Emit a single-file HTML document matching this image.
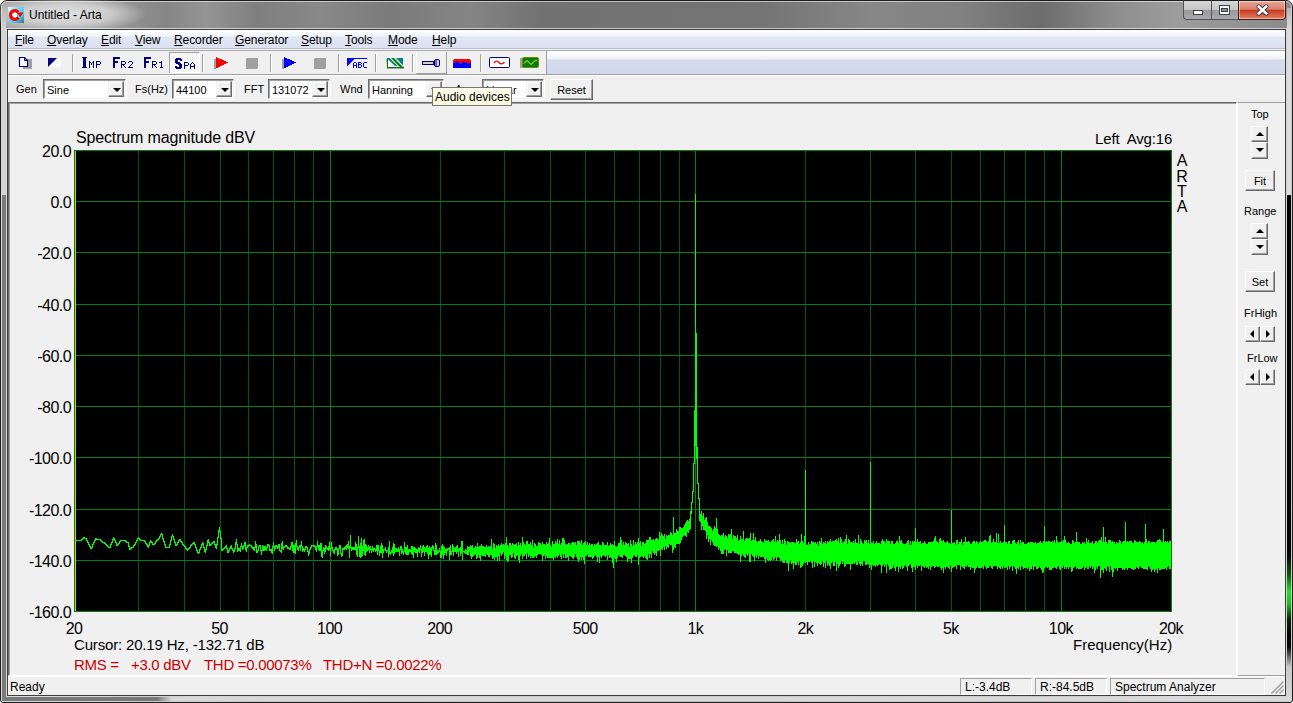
<!DOCTYPE html>
<html><head><meta charset="utf-8">
<style>
*{box-sizing:border-box}
html,body{margin:0;padding:0;width:1293px;height:703px;overflow:hidden;background:#fff}
body{font-family:"Liberation Sans",sans-serif;position:relative;color:#000}
.a{position:absolute}
.t{position:absolute;white-space:pre;line-height:1}
#frame{left:0;top:0;width:1293px;height:703px;border-radius:7px 7px 3px 3px;border:1px solid #1e1e1e;
 background:linear-gradient(to right,#a8a8a8 0px,#a0a0a0 100px,#8e8e8e 140px,#868686 165px,#949494 205px,#7f7f7f 255px,#888 320px,#7b7b7b 390px,#858585 470px,#727272 540px,#747474 760px,#878787 870px,#818181 960px,#6c6c6c 1040px,#8c8c8c 1110px,#9d9d9d 1175px,#8a8a8a 1293px)}
#frin{left:1px;top:1px;width:1291px;height:701px;border-radius:6px 6px 2px 2px;border:1px solid rgba(255,255,255,0.55)}
#client{left:7px;top:29px;width:1279px;height:667px;border:1px solid #3c3c3c;background:#f0f0f0;box-shadow:0 0 0 1px rgba(255,255,255,0.6)}
.u{text-decoration:underline}
.menu{font-size:12px;color:#000;letter-spacing:-0.1px}
.lbl{font-size:11px;color:#000}
.combo{position:absolute;height:20px;background:#fff;border:1px solid;border-color:#6e6e6e #f0f0f0 #f0f0f0 #6e6e6e;box-shadow:inset 1px 1px 0 #a0a0a0, 1px 1px 0 #fff}
.combo span{position:absolute;left:3px;top:4px;font-size:11px;white-space:pre}
.dd{position:absolute;right:1px;top:1px;width:16px;height:16px;background:#f0f0f0;border:1px solid;border-color:#f0f0f0 #696969 #696969 #f0f0f0;box-shadow:inset -1px -1px 0 #a0a0a0,inset 1px 1px 0 #fff}
.dd:after{content:"";position:absolute;left:4px;top:6px;border-left:4px solid transparent;border-right:4px solid transparent;border-top:4px solid #000}
.btn{position:absolute;background:#f0f0f0;border:1px solid;border-color:#fff #696969 #696969 #fff;box-shadow:inset -1px -1px 0 #a0a0a0;font-size:11px;text-align:center}
.sep{position:absolute;width:2px;height:22px;top:53px;border-left:1px solid #a0a0a0;border-right:1px solid #fff}
.spin{position:absolute;background:#f0f0f0;border:1px solid;border-color:#fff #696969 #696969 #fff;box-shadow:inset -1px -1px 0 #a0a0a0}
.spin i{position:absolute;width:0;height:0}
.spin .up{left:4px;top:5px;border-left:4px solid transparent;border-right:4px solid transparent;border-bottom:4px solid #000}
.spin .dn{left:4px;top:5px;border-left:4px solid transparent;border-right:4px solid transparent;border-top:4px solid #000}
.spin .lf{left:4px;top:3px;border-top:4px solid transparent;border-bottom:4px solid transparent;border-right:4px solid #000}
.spin .rt{left:5px;top:3px;border-top:4px solid transparent;border-bottom:4px solid transparent;border-left:4px solid #000}
.red{color:#c80000;letter-spacing:-0.3px}
.plotlbl{font-size:15px;color:#000}
.plotlbl.red{color:#c80000}
</style></head><body>
<div id="frame" class="a"></div>
<div class="a" style="left:0;top:0;width:260px;height:29px;background:radial-gradient(ellipse 80px 18px at 66px 14px,rgba(228,228,228,0.95) 0%,rgba(220,220,220,0.75) 55%,rgba(200,200,200,0) 100%)"></div>
<div class="a" style="left:2px;top:8px;width:4px;height:187px;background:linear-gradient(#b8b8b8,#d4d4d4 22px)"></div>
<div class="a" style="left:2px;top:195px;width:4px;height:502px;background:#7a7a7a"></div>
<div class="a" style="left:1287px;top:8px;width:4px;height:187px;background:linear-gradient(#b4b4b4,#dcdcdc 22px)"></div>
<div class="a" style="left:1287px;top:195px;width:4px;height:502px;background:linear-gradient(#050505 0px,#060606 360px,#0a5a0a 380px,#20e020 396px,#18c818 408px,#062806 424px,#050505 440px,#0a0a0a 452px,#c8c8c8 472px,#d8d8d8 502px)"></div>
<div class="a" style="left:2px;top:697px;width:1289px;height:4px;background:linear-gradient(to right,#7a7a7a 0px,#787878 155px,#d8d8d8 170px,#dadada 100%)"></div>
<div id="frin" class="a"></div>
<!-- title -->
<svg class="a" style="left:8px;top:7px" width="16" height="16" viewBox="8 7 16 16"><defs><linearGradient id="icg" x1="0" y1="0" x2="1" y2="1"><stop offset="0" stop-color="#e8fbff"/><stop offset="0.35" stop-color="#7fd8ec"/><stop offset="0.7" stop-color="#4cc4e4"/><stop offset="1" stop-color="#3a6f70"/></linearGradient></defs>
<rect x="8" y="7" width="16" height="16" fill="url(#icg)"/><ellipse cx="14.3" cy="15" rx="2.6" ry="3.4" fill="#f4ffff"/>
<path d="M18.1 12.2 A4.3 4.3 0 1 0 18.3 17.5" fill="none" stroke="#ff0000" stroke-width="3.2"/><path d="M16.6 12.4 L23.4 12.4 L20.2 17 Z" fill="#ff0000"/></svg>
<div class="t" style="left:29px;top:9px;font-size:12px;color:#000">Untitled - Arta</div>
<!-- caption buttons -->
<div class="a" style="left:1183px;top:1px;width:28px;height:19px;border:1px solid #555;border-right:none;border-top:none;border-radius:0 0 0 4px;background:linear-gradient(#d8d8d8,#c4c4c4 50%,#9a9a9a 52%,#a8a8b0)"></div>
<div class="a" style="left:1193px;top:10px;width:10px;height:5px;background:#fff;border:1px solid #3c4050"></div>
<div class="a" style="left:1211px;top:1px;width:27px;height:19px;border-bottom:1px solid #555;border-left:1px solid #555;background:linear-gradient(#d8d8d8,#c4c4c4 50%,#9a9a9a 52%,#a8a8b0)"></div>
<div class="a" style="left:1219px;top:5px;width:11px;height:10px;background:#fff;border:1px solid #3c4050"></div>
<div class="a" style="left:1221px;top:8px;width:7px;height:4px;background:#8a8a8a;border:1px solid #3c4050"></div>
<div class="a" style="left:1238px;top:1px;width:48px;height:19px;border:1px solid #4a1a10;border-top:none;border-radius:0 0 4px 0;background:linear-gradient(#eaa898,#dc8070 45%,#c83c20 52%,#d86848 85%,#d88870);box-shadow:inset 0 0 0 1px rgba(255,255,255,0.45)"></div>
<svg class="a" style="left:1256px;top:4px" width="13" height="12" viewBox="0 0 13 12"><path d="M2.8 2.6 L10.2 9.4 M10.2 2.6 L2.8 9.4" stroke="#343a4a" stroke-width="4.6" stroke-linecap="round"/><path d="M2.8 2.6 L10.2 9.4 M10.2 2.6 L2.8 9.4" stroke="#fff" stroke-width="2.6" stroke-linecap="square"/></svg>

<div id="client" class="a"></div>
<!-- menu bar -->
<div class="a" style="left:8px;top:30px;width:1277px;height:19px;background:linear-gradient(#fdfeff,#f1f4fa 6px,#e2e7f4 7px,#dae1f1 18px);border-bottom:1px solid #b9bec8"></div><div class="a" style="left:8px;top:49px;width:1277px;height:1px;background:#f4f4f4"></div>
<div class="t menu" style="left:15px;top:34px"><span class="u">F</span>ile</div>
<div class="t menu" style="left:47px;top:34px"><span class="u">O</span>verlay</div>
<div class="t menu" style="left:101px;top:34px"><span class="u">E</span>dit</div>
<div class="t menu" style="left:135px;top:34px"><span class="u">V</span>iew</div>
<div class="t menu" style="left:174px;top:34px"><span class="u">R</span>ecorder</div>
<div class="t menu" style="left:235px;top:34px"><span class="u">G</span>enerator</div>
<div class="t menu" style="left:301px;top:34px"><span class="u">S</span>etup</div>
<div class="t menu" style="left:345px;top:34px"><span class="u">T</span>ools</div>
<div class="t menu" style="left:388px;top:34px"><span class="u">M</span>ode</div>
<div class="t menu" style="left:432px;top:34px"><span class="u">H</span>elp</div>
<!-- toolbar -->
<div class="a" style="left:8px;top:50px;width:1277px;height:25px;background:linear-gradient(#fdfeff 1px,#eef1f9 8px,#d6dcee 9px,#d2d9ed 23px);border-top:1px solid #a8a8a8;border-bottom:1px solid #a0a0a0"></div>
<div class="a" style="left:8px;top:51px;width:539px;height:23px;background:#f0f0f0;border-right:1px solid #a0a0a0"></div>
<svg class="a" style="left:0;top:0" width="560" height="76"><defs><pattern id="dith" width="2" height="2" patternUnits="userSpaceOnUse"><rect width="2" height="2" fill="#f0f0f0"/><rect width="1" height="1" fill="#fff"/><rect x="1" y="1" width="1" height="1" fill="#fff"/></pattern></defs><path d="M72 54h1v18h-1z" fill="#a0a0a0"/><path d="M73 54h1v18h-1z" fill="#fff"/><path d="M202 54h1v18h-1z" fill="#a0a0a0"/><path d="M203 54h1v18h-1z" fill="#fff"/><path d="M270 54h1v18h-1z" fill="#a0a0a0"/><path d="M271 54h1v18h-1z" fill="#fff"/><path d="M338 54h1v18h-1z" fill="#a0a0a0"/><path d="M339 54h1v18h-1z" fill="#fff"/><path d="M375 54h1v18h-1z" fill="#a0a0a0"/><path d="M376 54h1v18h-1z" fill="#fff"/><path d="M412 54h1v18h-1z" fill="#a0a0a0"/><path d="M413 54h1v18h-1z" fill="#fff"/><path d="M480 54h1v18h-1z" fill="#a0a0a0"/><path d="M481 54h1v18h-1z" fill="#fff"/><rect x="169" y="52" width="30" height="21" fill="url(#dith)"/><path d="M169 52h30v1h-29v20h-1z" fill="#a0a0a0"/><path d="M199 52h1v21h-30v-1h29z" fill="#fff"/><path d="M416 52h1v21h-1z" fill="#fff"/><path d="M446 52h1v22h-31v-1h30z" fill="#a0a0a0"/><path d="M82 57h5v1h-5zM83 58h3v1h-3zM83 59h3v1h-3zM83 60h3v1h-3zM83 61h3v1h-3zM83 62h3v1h-3zM83 63h3v1h-3zM83 64h3v1h-3zM83 65h3v1h-3zM83 66h3v1h-3zM82 67h5v1h-5zM89 61h1v1h-1zM93 61h1v1h-1zM89 62h2v1h-2zM92 62h2v1h-2zM89 63h1v1h-1zM91 63h1v1h-1zM93 63h1v1h-1zM89 64h1v1h-1zM91 64h1v1h-1zM93 64h1v1h-1zM89 65h1v1h-1zM93 65h1v1h-1zM89 66h1v1h-1zM93 66h1v1h-1zM89 67h1v1h-1zM93 67h1v1h-1zM96 61h4v1h-4zM96 62h1v1h-1zM100 62h1v1h-1zM96 63h1v1h-1zM100 63h1v1h-1zM96 64h4v1h-4zM96 65h1v1h-1zM96 66h1v1h-1zM96 67h1v1h-1zM113 57h7v1h-7zM113 58h7v1h-7zM113 59h2v1h-2zM113 60h2v1h-2zM113 61h5v1h-5zM113 62h5v1h-5zM113 63h2v1h-2zM113 64h2v1h-2zM113 65h2v1h-2zM113 66h2v1h-2zM113 67h2v1h-2zM121 61h4v1h-4zM121 62h1v1h-1zM125 62h1v1h-1zM121 63h1v1h-1zM125 63h1v1h-1zM121 64h4v1h-4zM121 65h1v1h-1zM123 65h1v1h-1zM121 66h1v1h-1zM124 66h1v1h-1zM121 67h1v1h-1zM125 67h1v1h-1zM129 61h3v1h-3zM128 62h1v1h-1zM132 62h1v1h-1zM132 63h1v1h-1zM131 64h1v1h-1zM130 65h1v1h-1zM129 66h1v1h-1zM128 67h5v1h-5zM144 57h7v1h-7zM144 58h7v1h-7zM144 59h2v1h-2zM144 60h2v1h-2zM144 61h5v1h-5zM144 62h5v1h-5zM144 63h2v1h-2zM144 64h2v1h-2zM144 65h2v1h-2zM144 66h2v1h-2zM144 67h2v1h-2zM152 61h4v1h-4zM152 62h1v1h-1zM156 62h1v1h-1zM152 63h1v1h-1zM156 63h1v1h-1zM152 64h4v1h-4zM152 65h1v1h-1zM154 65h1v1h-1zM152 66h1v1h-1zM155 66h1v1h-1zM152 67h1v1h-1zM156 67h1v1h-1zM161 61h1v1h-1zM159 62h3v1h-3zM161 63h1v1h-1zM161 64h1v1h-1zM161 65h1v1h-1zM161 66h1v1h-1zM160 67h3v1h-3zM176 58h5v1h-5zM175 59h7v1h-7zM175 60h3v1h-3zM180 60h2v1h-2zM175 61h3v1h-3zM175 62h5v1h-5zM176 63h5v1h-5zM178 64h4v1h-4zM179 65h3v1h-3zM175 66h2v1h-2zM179 66h3v1h-3zM175 67h7v1h-7zM176 68h5v1h-5zM184 62h4v1h-4zM184 63h1v1h-1zM188 63h1v1h-1zM184 64h1v1h-1zM188 64h1v1h-1zM184 65h4v1h-4zM184 66h1v1h-1zM184 67h1v1h-1zM184 68h1v1h-1zM192 62h1v1h-1zM191 63h1v1h-1zM193 63h1v1h-1zM190 64h1v1h-1zM194 64h1v1h-1zM190 65h1v1h-1zM194 65h1v1h-1zM190 66h5v1h-5zM190 67h1v1h-1zM194 67h1v1h-1zM190 68h1v1h-1zM194 68h1v1h-1z" fill="#000080"/><rect x="23" y="59" width="9" height="10" fill="#a0a0a0"/><path d="M19.5 57.5H24.5L27.5 60.5V66.5H19.5Z" fill="#fff" stroke="#000080" stroke-width="1.2"/><path d="M24.5 57.5V60.5H27.5" fill="none" stroke="#000080" stroke-width="1"/><path d="M48 58H61V67H48Z" fill="#fff"/><path d="M48 58H57L48 67Z" fill="#000080"/><path d="M214 59h2v10h-2z" fill="#a0a0a0"/><path d="M216 57L228.5 62.5L216 68.5Z" fill="#ff0000" shape-rendering="crispEdges"/><path d="M247 58h11v10l-1 1h-11v-10z" fill="#a0a0a0"/><path d="M282 59h2v10h-2z" fill="#a0a0a0"/><path d="M284 57L296.5 62.5L284 68.5Z" fill="#0000ff" shape-rendering="crispEdges"/><path d="M315 58h11v10l-1 1h-11v-10z" fill="#a0a0a0"/><path d="M347 58h20v1h-12.5l-7.5 7.5z" fill="#0000ff"/><path d="M354 62h2v1h-2zM353 63h1v1h-1zM356 63h1v1h-1zM353 64h1v1h-1zM356 64h1v1h-1zM353 65h4v1h-4zM353 66h1v1h-1zM356 66h1v1h-1zM353 67h1v1h-1zM356 67h1v1h-1zM358 62h3v1h-3zM358 63h1v1h-1zM361 63h1v1h-1zM358 64h3v1h-3zM358 65h1v1h-1zM361 65h1v1h-1zM358 66h1v1h-1zM361 66h1v1h-1zM358 67h3v1h-3zM364 62h3v1h-3zM363 63h1v1h-1zM363 64h1v1h-1zM363 65h1v1h-1zM363 66h1v1h-1zM364 67h3v1h-3z" fill="#0000ff"/><path d="M386 59h1v10h17v-1h-17z" fill="#a8a0a8"/><path d="M387 58h16v10h-16z" fill="#fff"/><path d="M387 58h1v10h-1zM387 67h17v1h-17z" fill="#008000"/><path d="M387 58h2.6l8.2 8h-2.8l-8-7.6z" fill="#008080"/><path d="M391 58h3l9.5 9.5h-3.2z" fill="#008000"/><path d="M396 58h7v7.5z" fill="#008080"/><rect x="422.5" y="61.5" width="11" height="3" fill="#d8d4c0" stroke="#000080"/><rect x="434.5" y="59.5" width="5" height="7" rx="1.5" fill="#d8d4c0" stroke="#000080"/><path d="M436 60v6" stroke="#000080"/><path d="M453 60h1v3h-1zM454 59h1v4h-1zM455 59h1v3h-1zM456 59h1v2h-1zM457 59h1v2h-1zM458 59h1v3h-1zM459 59h1v4h-1zM460 59h1v5h-1zM461 59h1v4h-1zM462 59h1v3h-1zM463 59h1v2h-1zM464 59h1v3h-1zM465 59h1v4h-1zM466 59h1v3h-1zM467 59h1v4h-1zM468 59h1v5h-1zM469 59h1v4h-1zM470 60h1v2h-1z" fill="#ff0000"/><path d="M453 63h1v5h-1zM454 63h1v5h-1zM455 62h1v6h-1zM456 61h1v7h-1zM457 61h1v7h-1zM458 62h1v6h-1zM459 63h1v5h-1zM460 64h1v4h-1zM461 63h1v5h-1zM462 62h1v6h-1zM463 61h1v7h-1zM464 62h1v6h-1zM465 63h1v5h-1zM466 62h1v6h-1zM467 63h1v5h-1zM468 64h1v4h-1zM469 63h1v5h-1zM470 62h1v6h-1z" fill="#0000ff"/><rect x="489.5" y="57.5" width="20" height="10" rx="1" fill="#fff" stroke="#000080"/><path d="M494 63 Q496.5 59.5 499 62.5 T504.5 62" fill="none" stroke="#ff0000" stroke-width="1.3"/><rect x="520" y="58" width="3" height="10" fill="#a0a0a0"/><rect x="522" y="57" width="17" height="11" rx="2" fill="#808000"/><rect x="523" y="58" width="15" height="9" fill="#008000"/><path d="M524 63.5L527 60.5L531 64.5L535 60.5L537 60.5" fill="none" stroke="#ffff00" stroke-width="1"/></svg>
<!-- control bar -->
<div class="a" style="left:8px;top:75px;width:1277px;height:27px;background:#f0f0f0;border-top:1px solid #fff"></div>
<div class="t lbl" style="left:16px;top:84px">Gen</div>
<div class="combo" style="left:43px;top:79px;width:83px"><span>Sine</span><div class="dd"></div></div>
<div class="t lbl" style="left:135px;top:84px">Fs(Hz)</div>
<div class="combo" style="left:172px;top:79px;width:62px"><span>44100</span><div class="dd"></div></div>
<div class="t lbl" style="left:244px;top:84px">FFT</div>
<div class="combo" style="left:268px;top:79px;width:62px"><span>131072</span><div class="dd"></div></div>
<div class="t lbl" style="left:340px;top:84px">Wnd</div>
<div class="combo" style="left:368px;top:79px;width:76px"><span>Hanning</span><div class="dd"></div></div>
<div class="t lbl" style="left:455px;top:84px">Av</div>
<div class="combo" style="left:482px;top:79px;width:62px"><span>Linear</span><div class="dd"></div></div>
<div class="btn" style="left:550px;top:79px;width:43px;height:21px;padding-top:4px">Reset</div>
<!-- tooltip -->
<div class="a" style="left:432px;top:87px;width:80px;height:19px;background:linear-gradient(#ffffee,#fbf8dc);border:1px solid #767676;z-index:5"></div>
<div class="t" style="left:435px;top:91px;font-size:12px;z-index:6">Audio devices</div>

<!-- main panel -->
<div class="a" style="left:8px;top:102px;width:1229px;height:574px;border-top:1px solid #696969;border-left:1px solid #696969;border-right:1px solid #fff;border-bottom:1px solid #fff;box-shadow:inset 1px 1px 0 #a0a0a0"></div>
<div class="a" style="left:1237px;top:102px;width:48px;height:574px;border-top:1px solid #a0a0a0;border-left:1px solid #fff;border-bottom:1px solid #a0a0a0"></div>
<svg class="a" style="left:0;top:0" width="1293" height="703">
<rect x="74" y="150" width="1098" height="462" fill="#000"/>
<path d="M138.5 150V611M184.5 150V611M220.5 150V611M248.5 150V611M273.5 150V611M294.5 150V611M313.5 150V611M440.5 150V611M504.5 150V611M550.5 150V611M585.5 150V611M614.5 150V611M639.5 150V611M660.5 150V611M679.5 150V611M805.5 150V611M870.5 150V611M915.5 150V611M951.5 150V611M980.5 150V611M1004.5 150V611M1025.5 150V611M1044.5 150V611" stroke="#00560e" stroke-width="1" fill="none" shape-rendering="crispEdges"/>
<path d="M330.5 150V611M695.5 150V611M1061.5 150V611M74 201.5H1171M74 252.5H1171M74 304.5H1171M74 355.5H1171M74 406.5H1171M74 457.5H1171M74 509.5H1171M74 560.5H1171" stroke="#00801a" stroke-width="1" fill="none" shape-rendering="crispEdges"/>
<rect x="74.5" y="150.5" width="1097" height="461" fill="none" stroke="#008000" shape-rendering="crispEdges"/>
<path d="M75.5 151V611" stroke="#d0d000" shape-rendering="crispEdges"/>
<path d="M75 540h1v1h-1zM76 540h1v1h-1zM77 540h1v1h-1zM78 540h1v1h-1zM79 540h1v1h-1zM80 540h1v1h-1zM81 539h1v2h-1zM82 538h1v2h-1zM83 537h1v2h-1zM84 537h1v2h-1zM85 538h1v1h-1zM86 538h1v3h-1zM87 540h1v3h-1zM88 542h1v3h-1zM89 544h1v3h-1zM90 546h1v3h-1zM91 547h1v2h-1zM92 544h1v4h-1zM93 542h1v3h-1zM94 540h1v3h-1zM95 538h1v3h-1zM96 538h1v2h-1zM97 539h1v1h-1zM98 539h1v1h-1zM99 539h1v1h-1zM100 539h1v2h-1zM101 540h1v2h-1zM102 541h1v2h-1zM103 542h1v1h-1zM104 542h1v2h-1zM105 543h1v2h-1zM106 544h1v2h-1zM107 545h1v2h-1zM108 546h1v2h-1zM109 547h1v1h-1zM110 544h1v4h-1zM111 542h1v3h-1zM112 539h1v4h-1zM113 537h1v3h-1zM114 538h1v3h-1zM115 540h1v3h-1zM116 542h1v4h-1zM117 544h1v2h-1zM118 543h1v2h-1zM119 541h1v3h-1zM120 540h1v2h-1zM121 540h1v1h-1zM122 540h1v1h-1zM123 540h1v1h-1zM124 540h1v1h-1zM125 540h1v2h-1zM126 541h1v2h-1zM127 542h1v1h-1zM128 542h1v5h-1zM129 546h1v4h-1zM130 548h1v2h-1zM131 547h1v2h-1zM132 547h1v1h-1zM133 545h1v3h-1zM134 544h1v2h-1zM135 542h1v3h-1zM136 540h1v3h-1zM137 538h1v3h-1zM138 537h1v2h-1zM139 538h1v2h-1zM140 539h1v2h-1zM141 540h1v1h-1zM142 540h1v1h-1zM143 540h1v1h-1zM144 540h1v2h-1zM145 541h1v3h-1zM146 543h1v2h-1zM147 544h1v3h-1zM148 545h1v3h-1zM149 542h1v4h-1zM150 540h1v3h-1zM151 541h1v2h-1zM152 542h1v3h-1zM153 544h1v1h-1zM154 543h1v2h-1zM155 541h1v3h-1zM156 540h1v2h-1zM157 539h1v2h-1zM158 538h1v2h-1zM159 536h1v3h-1zM160 534h1v3h-1zM161 533h1v2h-1zM162 534h1v5h-1zM163 538h1v4h-1zM164 541h1v4h-1zM165 544h1v4h-1zM166 547h1v1h-1zM167 547h1v1h-1zM168 547h1v1h-1zM169 544h1v4h-1zM170 540h1v5h-1zM171 536h1v5h-1zM172 534h1v3h-1zM173 536h1v4h-1zM174 539h1v4h-1zM175 542h1v4h-1zM176 544h1v2h-1zM177 542h1v3h-1zM178 540h1v3h-1zM179 539h1v2h-1zM180 539h1v3h-1zM181 541h1v2h-1zM182 542h1v3h-1zM183 544h1v2h-1zM184 545h1v2h-1zM185 546h1v3h-1zM186 548h1v2h-1zM187 549h1v2h-1zM188 548h1v2h-1zM189 547h1v2h-1zM190 545h1v3h-1zM191 544h1v2h-1zM192 543h1v2h-1zM193 542h1v2h-1zM194 542h1v3h-1zM195 544h1v4h-1zM196 547h1v4h-1zM197 550h1v3h-1zM198 552h1v2h-1zM199 549h1v4h-1zM200 547h1v3h-1zM201 544h1v4h-1zM202 542h1v3h-1zM203 543h1v5h-1zM204 547h1v5h-1zM205 549h1v4h-1zM206 545h1v5h-1zM207 540h1v6h-1zM208 539h1v4h-1zM209 542h1v4h-1zM210 544h1v2h-1zM211 543h1v2h-1zM212 542h1v2h-1zM213 541h1v2h-1zM214 541h1v4h-1zM215 544h1v4h-1zM216 544h1v5h-1zM217 537h1v8h-1zM218 530h1v8h-1zM219 527h1v5h-1zM220 531h1v8h-1zM221 538h1v13h-1zM222 549h1v2h-1zM223 548h1v2h-1zM224 547h1v2h-1zM225 546h1v2h-1zM226 545h1v4h-1zM227 548h1v5h-1zM228 550h1v3h-1zM229 548h1v3h-1zM230 546h1v3h-1zM231 545h1v4h-1zM232 548h1v3h-1zM233 550h1v3h-1zM234 548h1v4h-1zM235 542h1v7h-1zM236 539h1v6h-1zM237 544h1v8h-1zM238 548h1v3h-1zM239 548h1v3h-1zM240 546h1v6h-1zM241 543h1v4h-1zM242 546h1v4h-1zM243 545h1v4h-1zM244 542h1v4h-1zM245 542h1v8h-1zM246 547h1v5h-1zM247 545h1v3h-1zM248 545h1v2h-1zM249 544h1v2h-1zM250 545h1v1h-1zM251 545h1v3h-1zM252 547h1v2h-1zM253 547h1v3h-1zM254 547h1v4h-1zM255 541h1v7h-1zM256 544h1v9h-1zM257 550h1v3h-1zM258 546h1v5h-1zM259 545h1v2h-1zM260 545h1v6h-1zM261 550h1v5h-1zM262 545h1v6h-1zM263 546h1v5h-1zM264 546h1v5h-1zM265 546h1v4h-1zM266 547h1v4h-1zM267 544h1v4h-1zM268 544h1v2h-1zM269 545h1v6h-1zM270 549h1v2h-1zM271 549h1v4h-1zM272 546h1v8h-1zM273 542h1v5h-1zM274 546h1v5h-1zM275 545h1v4h-1zM276 545h1v2h-1zM277 546h1v3h-1zM278 544h1v4h-1zM279 544h1v7h-1zM280 550h1v2h-1zM281 543h1v10h-1zM282 541h1v8h-1zM283 547h1v3h-1zM284 546h1v2h-1zM285 545h1v2h-1zM286 545h1v2h-1zM287 546h1v3h-1zM288 547h1v2h-1zM289 548h1v2h-1zM290 546h1v4h-1zM291 542h1v5h-1zM292 542h1v9h-1zM293 545h1v8h-1zM294 545h1v8h-1zM295 543h1v11h-1zM296 540h1v7h-1zM297 546h1v4h-1zM298 547h1v4h-1zM299 545h1v3h-1zM300 545h1v6h-1zM301 541h1v6h-1zM302 546h1v6h-1zM303 548h1v3h-1zM304 549h1v3h-1zM305 546h1v4h-1zM306 546h1v2h-1zM307 547h1v5h-1zM308 551h1v5h-1zM309 549h1v5h-1zM310 547h1v3h-1zM311 545h1v3h-1zM312 545h1v1h-1zM313 545h1v2h-1zM314 545h1v2h-1zM315 546h1v4h-1zM316 546h1v6h-1zM317 541h1v6h-1zM318 545h1v5h-1zM319 545h1v6h-1zM320 543h1v8h-1zM321 543h1v14h-1zM322 550h1v8h-1zM323 547h1v4h-1zM324 548h1v6h-1zM325 545h1v7h-1zM326 546h1v3h-1zM327 548h1v2h-1zM328 546h1v5h-1zM329 542h1v8h-1zM330 548h1v8h-1zM331 542h1v7h-1zM332 547h1v4h-1zM333 550h1v3h-1zM334 549h1v5h-1zM335 547h1v3h-1zM336 547h1v3h-1zM337 549h1v7h-1zM338 548h1v7h-1zM339 545h1v4h-1zM340 545h1v9h-1zM341 553h1v4h-1zM342 548h1v8h-1zM343 548h1v2h-1zM344 547h1v3h-1zM345 546h1v3h-1zM346 545h1v5h-1zM347 544h1v4h-1zM348 541h1v8h-1zM349 546h1v12h-1zM350 535h1v13h-1zM351 547h1v4h-1zM352 547h1v3h-1zM353 547h1v3h-1zM354 547h1v3h-1zM355 542h1v8h-1zM356 544h1v11h-1zM357 547h1v10h-1zM358 536h1v12h-1zM359 546h1v11h-1zM360 543h1v15h-1zM361 538h1v19h-1zM362 546h1v10h-1zM363 540h1v11h-1zM364 539h1v16h-1zM365 544h1v12h-1zM366 545h1v7h-1zM367 547h1v4h-1zM368 545h1v5h-1zM369 547h1v6h-1zM370 546h1v4h-1zM371 549h1v4h-1zM372 546h1v5h-1zM373 548h1v4h-1zM374 548h1v2h-1zM375 549h1v3h-1zM376 545h1v6h-1zM377 545h1v10h-1zM378 545h1v6h-1zM379 550h1v6h-1zM380 546h1v7h-1zM381 543h1v10h-1zM382 545h1v13h-1zM383 549h1v4h-1zM384 549h1v1h-1zM385 547h1v4h-1zM386 550h1v3h-1zM387 550h1v1h-1zM388 547h1v10h-1zM389 541h1v13h-1zM390 552h1v3h-1zM391 550h1v3h-1zM392 547h1v6h-1zM393 543h1v13h-1zM394 544h1v10h-1zM395 548h1v4h-1zM396 548h1v4h-1zM397 549h1v3h-1zM398 547h1v5h-1zM399 549h1v7h-1zM400 546h1v4h-1zM401 546h1v8h-1zM402 549h1v4h-1zM403 551h1v4h-1zM404 542h1v10h-1zM405 547h1v7h-1zM406 547h1v8h-1zM407 545h1v10h-1zM408 549h1v6h-1zM409 549h1v3h-1zM410 550h1v2h-1zM411 546h1v8h-1zM412 546h1v9h-1zM413 547h1v11h-1zM414 547h1v5h-1zM415 548h1v5h-1zM416 549h1v4h-1zM417 549h1v8h-1zM418 547h1v5h-1zM419 548h1v5h-1zM420 545h1v5h-1zM421 549h1v8h-1zM422 546h1v7h-1zM423 545h1v7h-1zM424 547h1v9h-1zM425 548h1v4h-1zM426 546h1v6h-1zM427 545h1v9h-1zM428 548h1v11h-1zM429 546h1v9h-1zM430 548h1v7h-1zM431 547h1v10h-1zM432 545h1v4h-1zM433 546h1v5h-1zM434 550h1v5h-1zM435 543h1v12h-1zM436 545h1v10h-1zM437 550h1v4h-1zM438 551h1v2h-1zM439 548h1v4h-1zM440 551h1v7h-1zM441 546h1v12h-1zM442 544h1v11h-1zM443 546h1v13h-1zM444 547h1v8h-1zM445 549h1v4h-1zM446 549h1v7h-1zM447 548h1v3h-1zM448 548h1v2h-1zM449 547h1v13h-1zM450 545h1v10h-1zM451 551h1v4h-1zM452 544h1v8h-1zM453 546h1v10h-1zM454 548h1v4h-1zM455 547h1v5h-1zM456 546h1v8h-1zM457 545h1v7h-1zM458 549h1v8h-1zM459 548h1v3h-1zM460 547h1v9h-1zM461 541h1v12h-1zM462 541h1v19h-1zM463 551h1v1h-1zM464 551h1v2h-1zM465 549h1v5h-1zM466 550h1v4h-1zM467 546h1v9h-1zM468 547h1v8h-1zM469 547h1v5h-1zM470 545h1v11h-1zM471 546h1v13h-1zM472 545h1v12h-1zM473 548h1v8h-1zM474 548h1v7h-1zM475 546h1v8h-1zM476 547h1v12h-1zM477 543h1v15h-1zM478 547h1v8h-1zM479 546h1v12h-1zM480 546h1v15h-1zM481 544h1v11h-1zM482 546h1v10h-1zM483 546h1v10h-1zM484 547h1v9h-1zM485 547h1v10h-1zM486 545h1v9h-1zM487 547h1v8h-1zM488 546h1v11h-1zM489 547h1v10h-1zM490 546h1v9h-1zM491 539h1v16h-1zM492 549h1v10h-1zM493 543h1v15h-1zM494 544h1v16h-1zM495 548h1v9h-1zM496 545h1v12h-1zM497 546h1v15h-1zM498 544h1v12h-1zM499 546h1v15h-1zM500 545h1v8h-1zM501 543h1v13h-1zM502 545h1v9h-1zM503 544h1v8h-1zM504 545h1v14h-1zM505 543h1v13h-1zM506 537h1v23h-1zM507 545h1v17h-1zM508 547h1v14h-1zM509 543h1v12h-1zM510 543h1v12h-1zM511 545h1v13h-1zM512 543h1v14h-1zM513 544h1v9h-1zM514 545h1v13h-1zM515 544h1v15h-1zM516 543h1v13h-1zM517 546h1v9h-1zM518 542h1v18h-1zM519 545h1v18h-1zM520 543h1v13h-1zM521 546h1v8h-1zM522 537h1v22h-1zM523 542h1v14h-1zM524 544h1v12h-1zM525 545h1v9h-1zM526 541h1v18h-1zM527 541h1v12h-1zM528 544h1v13h-1zM529 544h1v11h-1zM530 542h1v16h-1zM531 545h1v11h-1zM532 540h1v18h-1zM533 548h1v10h-1zM534 543h1v14h-1zM535 544h1v12h-1zM536 546h1v12h-1zM537 546h1v9h-1zM538 542h1v12h-1zM539 543h1v11h-1zM540 543h1v11h-1zM541 545h1v10h-1zM542 542h1v19h-1zM543 544h1v12h-1zM544 544h1v11h-1zM545 545h1v14h-1zM546 542h1v14h-1zM547 544h1v14h-1zM548 543h1v15h-1zM549 538h1v20h-1zM550 545h1v13h-1zM551 547h1v11h-1zM552 541h1v17h-1zM553 544h1v16h-1zM554 544h1v13h-1zM555 541h1v17h-1zM556 543h1v13h-1zM557 539h1v19h-1zM558 544h1v12h-1zM559 540h1v14h-1zM560 545h1v12h-1zM561 543h1v16h-1zM562 538h1v16h-1zM563 538h1v20h-1zM564 540h1v14h-1zM565 544h1v14h-1zM566 545h1v13h-1zM567 544h1v13h-1zM568 543h1v18h-1zM569 543h1v13h-1zM570 545h1v11h-1zM571 543h1v14h-1zM572 542h1v16h-1zM573 542h1v17h-1zM574 543h1v14h-1zM575 542h1v12h-1zM576 545h1v12h-1zM577 541h1v18h-1zM578 541h1v21h-1zM579 541h1v19h-1zM580 543h1v14h-1zM581 540h1v20h-1zM582 545h1v12h-1zM583 543h1v17h-1zM584 542h1v22h-1zM585 541h1v15h-1zM586 545h1v11h-1zM587 542h1v12h-1zM588 545h1v12h-1zM589 543h1v14h-1zM590 545h1v12h-1zM591 544h1v13h-1zM592 544h1v15h-1zM593 546h1v12h-1zM594 544h1v12h-1zM595 545h1v10h-1zM596 544h1v13h-1zM597 543h1v19h-1zM598 542h1v15h-1zM599 545h1v18h-1zM600 545h1v11h-1zM601 546h1v12h-1zM602 542h1v14h-1zM603 543h1v12h-1zM604 545h1v11h-1zM605 545h1v12h-1zM606 545h1v10h-1zM607 542h1v18h-1zM608 546h1v9h-1zM609 545h1v13h-1zM610 543h1v14h-1zM611 545h1v13h-1zM612 544h1v19h-1zM613 545h1v23h-1zM614 541h1v17h-1zM615 546h1v13h-1zM616 547h1v15h-1zM617 546h1v12h-1zM618 543h1v12h-1zM619 543h1v13h-1zM620 537h1v20h-1zM621 540h1v17h-1zM622 545h1v13h-1zM623 542h1v13h-1zM624 545h1v10h-1zM625 542h1v14h-1zM626 543h1v14h-1zM627 544h1v18h-1zM628 543h1v16h-1zM629 547h1v12h-1zM630 540h1v19h-1zM631 544h1v19h-1zM632 546h1v12h-1zM633 540h1v16h-1zM634 545h1v10h-1zM635 542h1v15h-1zM636 544h1v13h-1zM637 542h1v13h-1zM638 538h1v27h-1zM639 543h1v15h-1zM640 541h1v16h-1zM641 546h1v10h-1zM642 542h1v15h-1zM643 542h1v16h-1zM644 544h1v12h-1zM645 543h1v15h-1zM646 540h1v19h-1zM647 540h1v20h-1zM648 540h1v14h-1zM649 537h1v21h-1zM650 537h1v17h-1zM651 540h1v18h-1zM652 540h1v11h-1zM653 539h1v14h-1zM654 541h1v14h-1zM655 539h1v14h-1zM656 538h1v18h-1zM657 539h1v12h-1zM658 540h1v11h-1zM659 532h1v18h-1zM660 536h1v20h-1zM661 533h1v16h-1zM662 535h1v15h-1zM663 536h1v11h-1zM664 534h1v16h-1zM665 539h1v7h-1zM666 535h1v14h-1zM667 536h1v11h-1zM668 535h1v13h-1zM669 535h1v9h-1zM670 532h1v13h-1zM671 533h1v12h-1zM672 535h1v18h-1zM673 517h1v33h-1zM674 533h1v14h-1zM675 533h1v15h-1zM676 529h1v15h-1zM677 531h1v13h-1zM678 531h1v13h-1zM679 527h1v17h-1zM680 527h1v16h-1zM681 528h1v12h-1zM682 528h1v9h-1zM683 527h1v9h-1zM684 525h1v10h-1zM685 523h1v13h-1zM686 521h1v16h-1zM687 520h1v12h-1zM688 521h1v12h-1zM689 519h1v11h-1zM690 511h1v18h-1zM691 502h1v12h-1zM692 491h1v12h-1zM693 463h1v29h-1zM694 410h1v54h-1zM695 194h1v252h-1zM696 333h1v126h-1zM697 447h1v37h-1zM698 483h1v16h-1zM699 498h1v23h-1zM700 514h1v8h-1zM701 511h1v19h-1zM702 516h1v10h-1zM703 513h1v17h-1zM704 520h1v10h-1zM705 518h1v13h-1zM706 517h1v22h-1zM707 522h1v13h-1zM708 526h1v16h-1zM709 526h1v13h-1zM710 527h1v18h-1zM711 528h1v12h-1zM712 531h1v11h-1zM713 529h1v16h-1zM714 526h1v20h-1zM715 528h1v18h-1zM716 518h1v29h-1zM717 529h1v17h-1zM718 534h1v16h-1zM719 535h1v13h-1zM720 536h1v15h-1zM721 535h1v19h-1zM722 535h1v19h-1zM723 533h1v21h-1zM724 537h1v13h-1zM725 535h1v14h-1zM726 536h1v20h-1zM727 538h1v12h-1zM728 534h1v19h-1zM729 535h1v18h-1zM730 534h1v19h-1zM731 529h1v24h-1zM732 539h1v12h-1zM733 535h1v16h-1zM734 536h1v17h-1zM735 536h1v17h-1zM736 538h1v15h-1zM737 535h1v19h-1zM738 541h1v14h-1zM739 540h1v14h-1zM740 536h1v26h-1zM741 539h1v17h-1zM742 539h1v15h-1zM743 531h1v25h-1zM744 541h1v16h-1zM745 539h1v19h-1zM746 538h1v16h-1zM747 538h1v18h-1zM748 539h1v15h-1zM749 538h1v24h-1zM750 533h1v29h-1zM751 541h1v13h-1zM752 540h1v16h-1zM753 533h1v24h-1zM754 540h1v21h-1zM755 537h1v19h-1zM756 541h1v17h-1zM757 542h1v13h-1zM758 541h1v18h-1zM759 541h1v15h-1zM760 539h1v18h-1zM761 541h1v16h-1zM762 542h1v15h-1zM763 543h1v14h-1zM764 539h1v20h-1zM765 541h1v22h-1zM766 540h1v18h-1zM767 541h1v19h-1zM768 540h1v21h-1zM769 542h1v18h-1zM770 542h1v19h-1zM771 541h1v19h-1zM772 540h1v17h-1zM773 539h1v21h-1zM774 542h1v17h-1zM775 536h1v21h-1zM776 542h1v19h-1zM777 540h1v17h-1zM778 541h1v16h-1zM779 534h1v24h-1zM780 540h1v21h-1zM781 544h1v16h-1zM782 540h1v22h-1zM783 544h1v19h-1zM784 539h1v24h-1zM785 541h1v19h-1zM786 545h1v18h-1zM787 541h1v22h-1zM788 542h1v29h-1zM789 542h1v21h-1zM790 543h1v17h-1zM791 542h1v22h-1zM792 542h1v21h-1zM793 542h1v27h-1zM794 543h1v20h-1zM795 543h1v22h-1zM796 539h1v26h-1zM797 542h1v20h-1zM798 541h1v24h-1zM799 544h1v17h-1zM800 542h1v26h-1zM801 534h1v33h-1zM802 541h1v25h-1zM803 543h1v21h-1zM804 536h1v26h-1zM805 470h1v93h-1zM806 545h1v17h-1zM807 545h1v20h-1zM808 542h1v20h-1zM809 545h1v17h-1zM810 544h1v17h-1zM811 541h1v22h-1zM812 542h1v26h-1zM813 542h1v19h-1zM814 543h1v24h-1zM815 542h1v20h-1zM816 544h1v19h-1zM817 542h1v24h-1zM818 546h1v17h-1zM819 541h1v23h-1zM820 542h1v23h-1zM821 538h1v26h-1zM822 544h1v17h-1zM823 542h1v25h-1zM824 543h1v20h-1zM825 541h1v27h-1zM826 544h1v17h-1zM827 541h1v25h-1zM828 542h1v22h-1zM829 541h1v25h-1zM830 539h1v30h-1zM831 542h1v21h-1zM832 541h1v21h-1zM833 541h1v25h-1zM834 541h1v25h-1zM835 540h1v22h-1zM836 539h1v32h-1zM837 541h1v23h-1zM838 538h1v30h-1zM839 543h1v23h-1zM840 537h1v27h-1zM841 539h1v22h-1zM842 543h1v21h-1zM843 542h1v20h-1zM844 541h1v26h-1zM845 539h1v27h-1zM846 535h1v29h-1zM847 544h1v20h-1zM848 539h1v25h-1zM849 540h1v24h-1zM850 542h1v28h-1zM851 542h1v22h-1zM852 543h1v21h-1zM853 541h1v22h-1zM854 543h1v21h-1zM855 539h1v23h-1zM856 543h1v22h-1zM857 543h1v22h-1zM858 535h1v26h-1zM859 544h1v20h-1zM860 539h1v27h-1zM861 541h1v23h-1zM862 543h1v23h-1zM863 544h1v17h-1zM864 540h1v21h-1zM865 541h1v24h-1zM866 540h1v25h-1zM867 543h1v21h-1zM868 540h1v24h-1zM869 544h1v24h-1zM870 462h1v103h-1zM871 543h1v27h-1zM872 543h1v22h-1zM873 541h1v25h-1zM874 544h1v21h-1zM875 543h1v24h-1zM876 541h1v24h-1zM877 543h1v23h-1zM878 543h1v22h-1zM879 543h1v21h-1zM880 544h1v21h-1zM881 541h1v32h-1zM882 539h1v27h-1zM883 541h1v23h-1zM884 541h1v26h-1zM885 543h1v22h-1zM886 539h1v34h-1zM887 541h1v23h-1zM888 541h1v25h-1zM889 541h1v29h-1zM890 544h1v25h-1zM891 541h1v28h-1zM892 541h1v27h-1zM893 544h1v21h-1zM894 544h1v24h-1zM895 543h1v28h-1zM896 541h1v26h-1zM897 541h1v25h-1zM898 543h1v29h-1zM899 536h1v31h-1zM900 541h1v28h-1zM901 540h1v26h-1zM902 543h1v26h-1zM903 544h1v24h-1zM904 544h1v22h-1zM905 544h1v21h-1zM906 543h1v24h-1zM907 541h1v30h-1zM908 540h1v26h-1zM909 545h1v20h-1zM910 541h1v23h-1zM911 545h1v23h-1zM912 541h1v31h-1zM913 542h1v25h-1zM914 541h1v26h-1zM915 528h1v42h-1zM916 542h1v23h-1zM917 539h1v29h-1zM918 542h1v24h-1zM919 542h1v24h-1zM920 541h1v24h-1zM921 544h1v27h-1zM922 543h1v23h-1zM923 543h1v24h-1zM924 541h1v27h-1zM925 543h1v23h-1zM926 544h1v24h-1zM927 544h1v23h-1zM928 542h1v27h-1zM929 542h1v24h-1zM930 542h1v28h-1zM931 542h1v25h-1zM932 542h1v24h-1zM933 541h1v25h-1zM934 538h1v30h-1zM935 536h1v31h-1zM936 541h1v25h-1zM937 542h1v25h-1zM938 543h1v24h-1zM939 539h1v27h-1zM940 538h1v30h-1zM941 541h1v29h-1zM942 541h1v27h-1zM943 540h1v33h-1zM944 542h1v25h-1zM945 543h1v26h-1zM946 542h1v25h-1zM947 541h1v26h-1zM948 543h1v25h-1zM949 543h1v26h-1zM950 544h1v21h-1zM951 510h1v62h-1zM952 543h1v25h-1zM953 543h1v24h-1zM954 542h1v25h-1zM955 545h1v21h-1zM956 540h1v29h-1zM957 540h1v25h-1zM958 544h1v21h-1zM959 542h1v23h-1zM960 542h1v28h-1zM961 539h1v27h-1zM962 545h1v22h-1zM963 542h1v26h-1zM964 542h1v27h-1zM965 537h1v29h-1zM966 542h1v25h-1zM967 542h1v23h-1zM968 541h1v26h-1zM969 542h1v25h-1zM970 544h1v26h-1zM971 544h1v23h-1zM972 542h1v26h-1zM973 541h1v27h-1zM974 541h1v32h-1zM975 543h1v26h-1zM976 541h1v27h-1zM977 542h1v24h-1zM978 544h1v24h-1zM979 542h1v26h-1zM980 541h1v27h-1zM981 542h1v26h-1zM982 542h1v25h-1zM983 541h1v28h-1zM984 540h1v25h-1zM985 540h1v27h-1zM986 541h1v28h-1zM987 543h1v25h-1zM988 541h1v27h-1zM989 536h1v30h-1zM990 535h1v31h-1zM991 543h1v25h-1zM992 542h1v27h-1zM993 539h1v27h-1zM994 542h1v24h-1zM995 542h1v24h-1zM996 533h1v33h-1zM997 543h1v26h-1zM998 534h1v33h-1zM999 543h1v25h-1zM1000 541h1v28h-1zM1001 543h1v24h-1zM1002 543h1v26h-1zM1003 542h1v24h-1zM1004 525h1v43h-1zM1005 542h1v26h-1zM1006 542h1v25h-1zM1007 544h1v26h-1zM1008 541h1v25h-1zM1009 541h1v28h-1zM1010 544h1v23h-1zM1011 544h1v22h-1zM1012 541h1v30h-1zM1013 540h1v26h-1zM1014 540h1v27h-1zM1015 543h1v26h-1zM1016 544h1v30h-1zM1017 542h1v26h-1zM1018 540h1v29h-1zM1019 545h1v22h-1zM1020 540h1v30h-1zM1021 543h1v23h-1zM1022 542h1v25h-1zM1023 542h1v27h-1zM1024 544h1v24h-1zM1025 544h1v24h-1zM1026 544h1v24h-1zM1027 543h1v26h-1zM1028 542h1v25h-1zM1029 543h1v28h-1zM1030 542h1v27h-1zM1031 542h1v27h-1zM1032 542h1v24h-1zM1033 543h1v27h-1zM1034 543h1v24h-1zM1035 542h1v24h-1zM1036 544h1v25h-1zM1037 543h1v26h-1zM1038 543h1v25h-1zM1039 542h1v24h-1zM1040 541h1v27h-1zM1041 543h1v27h-1zM1042 543h1v30h-1zM1043 541h1v31h-1zM1044 526h1v42h-1zM1045 542h1v25h-1zM1046 541h1v26h-1zM1047 542h1v26h-1zM1048 541h1v26h-1zM1049 541h1v29h-1zM1050 542h1v28h-1zM1051 542h1v28h-1zM1052 541h1v27h-1zM1053 542h1v26h-1zM1054 540h1v27h-1zM1055 543h1v25h-1zM1056 536h1v33h-1zM1057 541h1v26h-1zM1058 543h1v23h-1zM1059 542h1v27h-1zM1060 542h1v28h-1zM1061 541h1v26h-1zM1062 542h1v26h-1zM1063 540h1v26h-1zM1064 536h1v33h-1zM1065 540h1v27h-1zM1066 543h1v26h-1zM1067 543h1v24h-1zM1068 542h1v27h-1zM1069 543h1v24h-1zM1070 544h1v23h-1zM1071 544h1v28h-1zM1072 540h1v31h-1zM1073 541h1v27h-1zM1074 543h1v24h-1zM1075 542h1v24h-1zM1076 532h1v37h-1zM1077 542h1v26h-1zM1078 542h1v27h-1zM1079 542h1v27h-1zM1080 544h1v25h-1zM1081 544h1v25h-1zM1082 542h1v26h-1zM1083 543h1v23h-1zM1084 542h1v28h-1zM1085 544h1v24h-1zM1086 538h1v29h-1zM1087 542h1v27h-1zM1088 540h1v29h-1zM1089 543h1v23h-1zM1090 543h1v25h-1zM1091 543h1v23h-1zM1092 541h1v28h-1zM1093 544h1v23h-1zM1094 543h1v30h-1zM1095 541h1v29h-1zM1096 541h1v26h-1zM1097 543h1v26h-1zM1098 541h1v25h-1zM1099 540h1v26h-1zM1100 540h1v38h-1zM1101 537h1v33h-1zM1102 542h1v28h-1zM1103 527h1v46h-1zM1104 542h1v26h-1zM1105 537h1v32h-1zM1106 542h1v29h-1zM1107 544h1v22h-1zM1108 540h1v27h-1zM1109 540h1v32h-1zM1110 540h1v26h-1zM1111 542h1v28h-1zM1112 541h1v36h-1zM1113 542h1v30h-1zM1114 542h1v26h-1zM1115 544h1v25h-1zM1116 542h1v26h-1zM1117 543h1v28h-1zM1118 543h1v25h-1zM1119 540h1v28h-1zM1120 541h1v27h-1zM1121 544h1v24h-1zM1122 542h1v28h-1zM1123 541h1v28h-1zM1124 541h1v29h-1zM1125 522h1v46h-1zM1126 542h1v26h-1zM1127 541h1v29h-1zM1128 542h1v26h-1zM1129 541h1v27h-1zM1130 541h1v27h-1zM1131 541h1v28h-1zM1132 543h1v26h-1zM1133 543h1v27h-1zM1134 540h1v29h-1zM1135 541h1v28h-1zM1136 542h1v25h-1zM1137 542h1v26h-1zM1138 542h1v27h-1zM1139 541h1v26h-1zM1140 542h1v24h-1zM1141 543h1v25h-1zM1142 542h1v26h-1zM1143 544h1v25h-1zM1144 542h1v27h-1zM1145 524h1v45h-1zM1146 539h1v30h-1zM1147 543h1v27h-1zM1148 541h1v25h-1zM1149 541h1v26h-1zM1150 543h1v26h-1zM1151 542h1v30h-1zM1152 542h1v28h-1zM1153 542h1v27h-1zM1154 542h1v30h-1zM1155 543h1v27h-1zM1156 542h1v27h-1zM1157 540h1v33h-1zM1158 540h1v28h-1zM1159 539h1v31h-1zM1160 540h1v30h-1zM1161 542h1v27h-1zM1162 542h1v27h-1zM1163 529h1v40h-1zM1164 542h1v27h-1zM1165 541h1v27h-1zM1166 542h1v28h-1zM1167 541h1v26h-1zM1168 543h1v23h-1zM1169 541h1v28h-1zM1170 541h1v28h-1z" fill="#00ff00" shape-rendering="crispEdges"/>
</svg>
<div class="t" style="left:76px;top:130px;font-size:16px;letter-spacing:-0.15px">Spectrum magnitude dBV</div>
<div class="t" style="left:1095px;top:131px;font-size:15px;letter-spacing:-0.15px">Left  Avg:16</div>
<div class="t" style="left:1175px;top:153px;font-size:16px;text-align:center;width:14px">A</div><div class="t" style="left:1175px;top:169px;font-size:16px;text-align:center;width:14px">R</div><div class="t" style="left:1175px;top:184px;font-size:16px;text-align:center;width:14px">T</div><div class="t" style="left:1175px;top:199px;font-size:16px;text-align:center;width:14px">A</div>
<div class="t plotlbl" style="right:1222px;top:144px;font-size:16px;letter-spacing:-0.55px">20.0</div><div class="t plotlbl" style="right:1222px;top:195px;font-size:16px;letter-spacing:-0.55px">0.0</div><div class="t plotlbl" style="right:1222px;top:246px;font-size:16px;letter-spacing:-0.55px">-20.0</div><div class="t plotlbl" style="right:1222px;top:298px;font-size:16px;letter-spacing:-0.55px">-40.0</div><div class="t plotlbl" style="right:1222px;top:349px;font-size:16px;letter-spacing:-0.55px">-60.0</div><div class="t plotlbl" style="right:1222px;top:400px;font-size:16px;letter-spacing:-0.55px">-80.0</div><div class="t plotlbl" style="right:1222px;top:451px;font-size:16px;letter-spacing:-0.55px">-100.0</div><div class="t plotlbl" style="right:1222px;top:503px;font-size:16px;letter-spacing:-0.55px">-120.0</div><div class="t plotlbl" style="right:1222px;top:554px;font-size:16px;letter-spacing:-0.55px">-140.0</div><div class="t plotlbl" style="right:1222px;top:605px;font-size:16px;letter-spacing:-0.55px">-160.0</div>
<div class="t plotlbl" style="left:24.0px;width:100px;text-align:center;top:621px;font-size:16px;letter-spacing:-0.55px">20</div><div class="t plotlbl" style="left:169.5px;width:100px;text-align:center;top:621px;font-size:16px;letter-spacing:-0.55px">50</div><div class="t plotlbl" style="left:279.6px;width:100px;text-align:center;top:621px;font-size:16px;letter-spacing:-0.55px">100</div><div class="t plotlbl" style="left:389.7px;width:100px;text-align:center;top:621px;font-size:16px;letter-spacing:-0.55px">200</div><div class="t plotlbl" style="left:535.2px;width:100px;text-align:center;top:621px;font-size:16px;letter-spacing:-0.55px">500</div><div class="t plotlbl" style="left:645.3px;width:100px;text-align:center;top:621px;font-size:16px;letter-spacing:-0.55px">1k</div><div class="t plotlbl" style="left:755.3px;width:100px;text-align:center;top:621px;font-size:16px;letter-spacing:-0.55px">2k</div><div class="t plotlbl" style="left:900.8px;width:100px;text-align:center;top:621px;font-size:16px;letter-spacing:-0.55px">5k</div><div class="t plotlbl" style="left:1010.9px;width:100px;text-align:center;top:621px;font-size:16px;letter-spacing:-0.55px">10k</div><div class="t plotlbl" style="left:1121.0px;width:100px;text-align:center;top:621px;font-size:16px;letter-spacing:-0.55px">20k</div>
<div class="t plotlbl" style="left:74px;top:637px;letter-spacing:-0.17px">Cursor: 20.19 Hz, -132.71 dB</div>
<div class="t plotlbl red" style="left:74px;top:657px">RMS =</div>
<div class="t plotlbl red" style="left:131px;top:657px">+3.0 dBV</div>
<div class="t plotlbl red" style="left:204px;top:657px">THD =0.00073%</div>
<div class="t plotlbl red" style="left:323px;top:657px">THD+N =0.0022%</div>
<div class="t plotlbl" style="left:1073px;top:637px">Frequency(Hz)</div>
<!-- right panel -->
<div class="t lbl" style="left:1251px;top:109px">Top</div>
<div class="spin" style="left:1251px;top:126px;width:17px;height:16px"><i class="up"></i></div>
<div class="spin" style="left:1251px;top:142px;width:17px;height:17px"><i class="dn"></i></div>
<div class="btn" style="left:1245px;top:170px;width:30px;height:21px;padding-top:4px">Fit</div>
<div class="t lbl" style="left:1244px;top:206px">Range</div>
<div class="spin" style="left:1251px;top:223px;width:17px;height:16px"><i class="up"></i></div>
<div class="spin" style="left:1251px;top:239px;width:17px;height:16px"><i class="dn"></i></div>
<div class="btn" style="left:1245px;top:271px;width:30px;height:21px;padding-top:4px">Set</div>
<div class="t lbl" style="left:1244px;top:308px">FrHigh</div>
<div class="spin" style="left:1245px;top:326px;width:15px;height:16px"><i class="lf"></i></div>
<div class="spin" style="left:1260px;top:326px;width:15px;height:16px"><i class="rt"></i></div>
<div class="t lbl" style="left:1247px;top:353px">FrLow</div>
<div class="spin" style="left:1245px;top:369px;width:15px;height:16px"><i class="lf"></i></div>
<div class="spin" style="left:1260px;top:369px;width:15px;height:16px"><i class="rt"></i></div>

<!-- status bar -->
<div class="a" style="left:8px;top:676px;width:1277px;height:19px;background:#f0f0f0;border-top:1px solid #fff"></div>
<div class="t" style="left:10px;top:681px;font-size:12px">Ready</div>
<div class="a" style="left:960px;top:678px;width:72px;height:17px;border:1px solid;border-color:#a0a0a0 #fff #fff #a0a0a0"></div>
<div class="t" style="left:965px;top:681px;font-size:12px">L:-3.4dB</div>
<div class="a" style="left:1035px;top:678px;width:72px;height:17px;border:1px solid;border-color:#a0a0a0 #fff #fff #a0a0a0"></div>
<div class="t" style="left:1040px;top:681px;font-size:12px">R:-84.5dB</div>
<div class="a" style="left:1110px;top:678px;width:155px;height:17px;border:1px solid;border-color:#a0a0a0 #fff #fff #a0a0a0"></div>
<div class="t" style="left:1115px;top:681px;font-size:12px">Spectrum Analyzer</div>
<svg class="a" style="left:1268px;top:678px" width="17" height="17"><path d="M15.5 3.5L3.5 15.5M15.5 7.5L7.5 15.5M15.5 11.5L11.5 15.5" stroke="#a0a0a0" stroke-width="1.5"/><path d="M16.5 4.5L4.5 16.5M16.5 8.5L8.5 16.5M16.5 12.5L12.5 16.5" stroke="#fff" stroke-width="1"/></svg>
</body></html>
